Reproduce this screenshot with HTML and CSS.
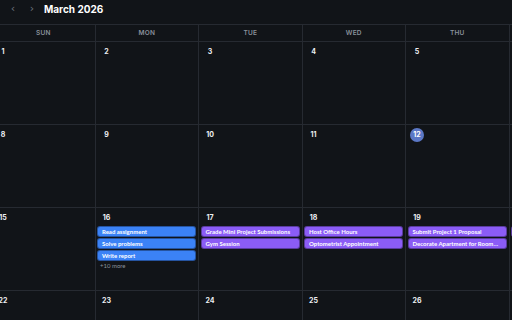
FILE: index.html
```html
<!DOCTYPE html>
<html lang="en">
<head>
    <meta charset="UTF-8">
    <meta name="viewport" content="width=device-width, initial-scale=1.0">
    <title>March 2026</title>
    <link rel="stylesheet" href="styles.css">
</head>
<body>
    <div class="toolbar">
        <button class="nav-btn">&#8249;</button>
        <button class="nav-btn">&#8250;</button>
        <h1>March 2026</h1>
    </div>

    <div class="calendar">
        <!-- Weekday header -->
        <div class="weekdays">
            <div>SUN</div><div>MON</div><div>TUE</div><div>WED</div><div>THU</div><div>FRI</div><div>SAT</div>
        </div>

        <div class="week">
            <div class="day"><span class="num">1</span></div>
            <div class="day"><span class="num">2</span></div>
            <div class="day"><span class="num">3</span></div>
            <div class="day"><span class="num">4</span></div>
            <div class="day"><span class="num">5</span></div>
            <div class="day"><span class="num">6</span></div>
            <div class="day"><span class="num">7</span></div>
        </div>

        <div class="week">
            <div class="day"><span class="num">8</span></div>
            <div class="day"><span class="num">9</span></div>
            <div class="day"><span class="num">10</span></div>
            <div class="day"><span class="num">11</span></div>
            <div class="day"><span class="num today">12</span></div>
            <div class="day"><span class="num">13</span></div>
            <div class="day"><span class="num">14</span></div>
        </div>

        <div class="week">
            <div class="day"><span class="num">15</span></div>
            <div class="day">
                <span class="num">16</span>
                <div class="event blue">Read assignment</div>
                <div class="event blue">Solve problems</div>
                <div class="event blue">Write report</div>
                <div class="more">+10 more</div>
            </div>
            <div class="day">
                <span class="num">17</span>
                <div class="event purple">Grade Mini Project Submissions</div>
                <div class="event purple">Gym Session</div>
            </div>
            <div class="day">
                <span class="num">18</span>
                <div class="event purple">Host Office Hours</div>
                <div class="event purple">Optometrist Appointment</div>
            </div>
            <div class="day">
                <span class="num">19</span>
                <div class="event purple">Submit Project 1 Proposal</div>
                <div class="event purple">Decorate Apartment for Roommate's Birthday</div>
            </div>
            <div class="day">
                <span class="num">20</span>
                <div class="event purple">Team Meeting</div>
            </div>
            <div class="day"><span class="num">21</span></div>
        </div>

        <div class="week">
            <div class="day"><span class="num">22</span></div>
            <div class="day"><span class="num">23</span></div>
            <div class="day"><span class="num">24</span></div>
            <div class="day"><span class="num">25</span></div>
            <div class="day"><span class="num">26</span></div>
            <div class="day"><span class="num">27</span></div>
            <div class="day"><span class="num">28</span></div>
        </div>
    </div>
</body>
</html>
```

FILE: styles.css
```css
body {
    margin: 0;
    background-color: #111418;
    color: #e6e8eb;
    font-family: Inter, "Noto Sans", sans-serif;
    overflow: hidden;
    height: 320px;
}

.toolbar {
    display: flex;
    align-items: center;
    height: 18px;
    padding: 0 0 6px 6px;
}

.nav-btn {
    background: none;
    border: none;
    color: #6c737c;
    font-size: 11px;
    width: 14px;
    height: 18px;
    padding: 0;
    margin-right: 5px;
    line-height: 16px;
    font-family: "DejaVu Sans", sans-serif;
}

.toolbar h1 {
    margin: 0;
    font-size: 10px;
    font-weight: 700;
    color: #ffffff;
}

.calendar {
    margin-left: -8px;
    width: 724px;
}

.weekdays,
.week {
    display: grid;
    grid-template-columns: repeat(7, 103.5px);
}

.weekdays {
    height: 16px;
    border-top: 1px solid #262a31;
    border-bottom: 1px solid #262a31;
}

.weekdays div {
    border-right: 1px solid #262a31;
    font-size: 6.5px;
    font-weight: 600;
    color: #8a929c;
    text-align: center;
    line-height: 16px;
    letter-spacing: 0.2px;
}

.week {
    height: 82px;
    border-bottom: 1px solid #262a31;
}

.day {
    border-right: 1px solid #262a31;
    padding: 3px 2px 0 1.5px;
    min-width: 0;
}

.num {
    display: block;
    width: 14px;
    height: 14px;
    margin-left: 2.5px;
    margin-bottom: 1px;
    border-radius: 50%;
    font-size: 7px;
    font-weight: 700;
    line-height: 14px;
    text-align: center;
    color: #eef0f3;
}

.num.today {
    background-color: #5b78c6;
    color: #ffffff;
}

.event {
    height: 9px;
    margin-bottom: 1px;
    padding: 0 4px;
    border: 1px solid rgba(0, 0, 0, 0.35);
    border-radius: 3px;
    font-family: Lato, "Noto Sans", sans-serif;
    font-size: 6px;
    font-weight: 700;
    line-height: 9px;
    color: #ffffff;
    white-space: nowrap;
    overflow: hidden;
    text-overflow: ellipsis;
}

.event.blue {
    background-color: #3b82f6;
}

.event.purple {
    background-color: #8b5cf6;
}

.more {
    padding-left: 3px;
    margin-top: 1px;
    font-family: Lato, "Noto Sans", sans-serif;
    font-size: 6px;
    color: #8a929c;
}
```
